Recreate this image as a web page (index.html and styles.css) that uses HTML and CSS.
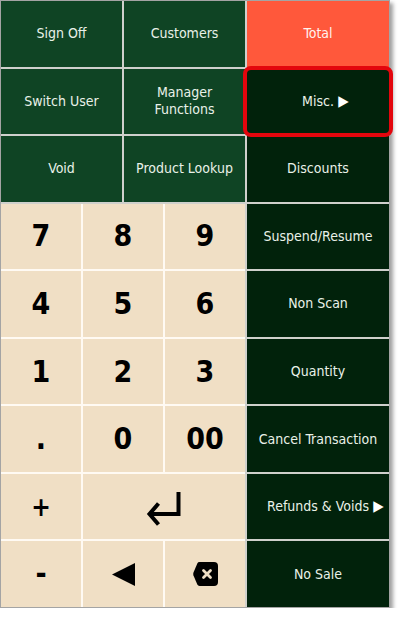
FILE: index.html
```html
<!DOCTYPE html>
<html lang="en">
<head>
<meta charset="utf-8">
<title>POS Keypad</title>
<link rel="stylesheet" href="styles.css">
</head>
<body>
<div class="pos">
  <div class="fn">
    <div class="key green">Sign Off</div>
    <div class="key green">Customers</div>
    <div class="key green">Switch User</div>
    <div class="key green">Manager<br>Functions</div>
    <div class="key green">Void</div>
    <div class="key green">Product Lookup</div>
  </div>
  <div class="key side total">Total</div>
  <div class="key side misc"><span>Misc.<span class="arrow">&nbsp;▶</span></span></div>
  <div class="key side">Discounts</div>
  <div class="pad">
    <div class="num">7</div>
    <div class="num">8</div>
    <div class="num">9</div>
    <div class="num">4</div>
    <div class="num">5</div>
    <div class="num">6</div>
    <div class="num">1</div>
    <div class="num">2</div>
    <div class="num">3</div>
    <div class="num">.</div>
    <div class="num">0</div>
    <div class="num">00</div>
    <div class="num op">+</div>
    <div class="num enter">
      <svg width="36" height="37" viewBox="0 0 36 37"><path d="M32.5 2 V24 H4" fill="none" stroke="#000" stroke-width="4"/><path d="M12.5 13.5 L3.5 24 L12.5 34.5" fill="none" stroke="#000" stroke-width="4"/></svg>
    </div>
    <div class="num op minus">-</div>
    <div class="num">
      <svg width="23" height="23" viewBox="0 0 23 23"><polygon points="23,0 23,23 0,11.5" fill="#000"/></svg>
    </div>
    <div class="num">
      <svg width="25" height="24" viewBox="0 0 25 24"><path d="M6.5 0 H21 Q25 0 25 4 V20 Q25 24 21 24 H6.5 Q5 24 4.3 22.6 L0.4 13.2 Q0 12 0.4 10.8 L4.3 1.4 Q5 0 6.5 0 Z" fill="#000"/><path d="M10.5 8.5 L17.5 15.5 M17.5 8.5 L10.5 15.5" stroke="#f0dfc5" stroke-width="2.8" stroke-linecap="round"/></svg>
    </div>
  </div>
  <div class="key side">Suspend/Resume</div>
  <div class="key side">Non Scan</div>
  <div class="key side">Quantity</div>
  <div class="key side">Cancel Transaction</div>
  <div class="key side"><span>Refunds &amp; Voids<span class="arrow">&nbsp;▶</span></span></div>
  <div class="key side">No Sale</div>
</div>
</body>
</html>
```
FILE: styles.css
```css
html, body {
  margin: 0;
  padding: 0;
  background: #ffffff;
}

.pos {
  box-sizing: border-box;
  width: 390px;
  height: 608px;
  border: 1px solid #a4a4a4;
  box-shadow: 3px 3px 4px rgba(0, 0, 0, 0.38);
  display: grid;
  grid-template-columns: 1fr 142px;
  grid-template-rows: repeat(9, 1fr);
  gap: 2px;
  background: #cfd0cc;
  font-family: "DejaVu Sans Condensed", "DejaVu Sans", sans-serif;
  font-stretch: condensed;
}

.fn {
  grid-column: 1;
  grid-row: 1 / span 3;
  display: grid;
  grid-template-columns: 1fr 1fr;
  grid-template-rows: repeat(3, 1fr);
  gap: 2px;
}

.pad {
  grid-column: 1;
  grid-row: 4 / span 6;
  display: grid;
  grid-template-columns: repeat(3, 1fr);
  grid-template-rows: repeat(6, 1fr);
  gap: 2px;
  background: #fffaf3;
}

.key {
  display: flex;
  align-items: center;
  justify-content: center;
  text-align: center;
  font-size: 14px;
  line-height: 17px;
  color: #e9f1e8;
  white-space: nowrap;
}

.green {
  background: #0f4424;
}

.side {
  grid-column: 2;
  background: #01220b;
}

.total {
  background: #ff583b;
  color: #fff3ee;
}

.misc {
  position: relative;
}

.misc::after {
  content: "";
  position: absolute;
  top: -3px;
  bottom: -3px;
  left: -4px;
  right: -4px;
  border: 4px solid #e3060d;
  border-radius: 8px;
  z-index: 2;
}

.arrow {
  display: inline-block;
  width: 0;
  white-space: nowrap;
  font-size: 15px;
  color: #ffffff;
}

.num {
  display: flex;
  align-items: center;
  justify-content: center;
  background: #f0dfc5;
  color: #000;
  font-size: 30px;
  font-weight: bold;
  line-height: 1;
}

.op {
  font-size: 26px;
}

.minus {
  font-size: 30px;
}

.enter {
  grid-column: span 2;
}

.enter svg {
  margin-top: 3px;
}
```
